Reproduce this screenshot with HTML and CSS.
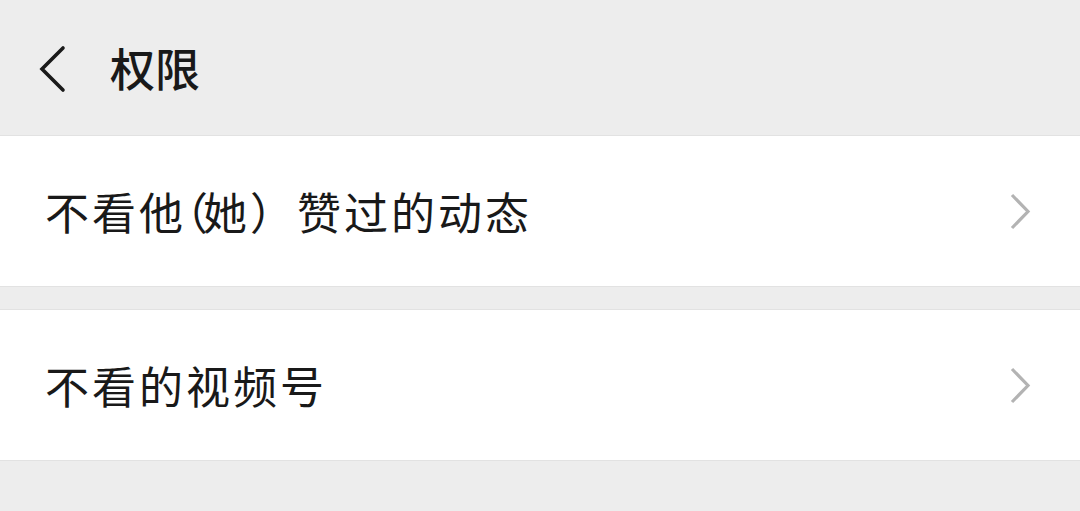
FILE: index.html
```html
<!DOCTYPE html>
<html lang="zh-CN">
<head>
<meta charset="utf-8">
<link rel="stylesheet" href="styles.css">
</head>
<body>
<header class="bar">
  <svg class="back" width="40" height="60" viewBox="0 0 40 60"><path d="M25 9 L4 30 L25 51" fill="none" stroke="#1a1a1a" stroke-width="3.6" stroke-linecap="round" stroke-linejoin="miter"/></svg>
  <h1 class="title">权限</h1>
</header>
<section class="group first">
  <div class="cell"><span class="label">不看他<span class="popen">（</span>她）赞过的动态</span>
    <svg class="arrow" width="24" height="40" viewBox="0 0 24 40"><path d="M4 3 L20 19.5 L4 36" fill="none" stroke="#b3b3b3" stroke-width="3.2"/></svg></div>
</section>
<section class="group">
  <div class="cell"><span class="label">不看的视频号</span>
    <svg class="arrow" width="24" height="40" viewBox="0 0 24 40"><path d="M4 3 L20 19.5 L4 36" fill="none" stroke="#b3b3b3" stroke-width="3.2"/></svg></div>
</section>
</body>
</html>
```
FILE: styles.css
```css
html, body { margin: 0; padding: 0; }
body {
  background: #ededed;
  font-family: "Noto Sans CJK SC", "Noto Sans", sans-serif;
  color: #191919;
  width: 1080px;
  height: 511px;
  overflow: hidden;
}
.bar {
  height: 135px;
  display: flex;
  align-items: center;
  border-bottom: 1px solid #e2e2e2;
  box-sizing: content-box;
}
.back { margin-left: 38px; margin-top: 2px; }
.title {
  margin: 0 0 0 32px;
  font-size: 45px;
  font-weight: 500;
  line-height: 1;
}
.group {
  background: #fff;
  border-bottom: 1px solid #e2e2e2;
}
.group + .group { margin-top: 22px; border-top: 1px solid #e2e2e2; }
.cell {
  height: 150px;
  display: flex;
  align-items: center;
  justify-content: space-between;
  padding: 0 48px 0 45px;
}
.label { font-size: 44px; line-height: 1; letter-spacing: 3px; }
.popen { font-feature-settings: "halt" 1; letter-spacing: -5px; }
.arrow { margin-top: 2px; }
```
